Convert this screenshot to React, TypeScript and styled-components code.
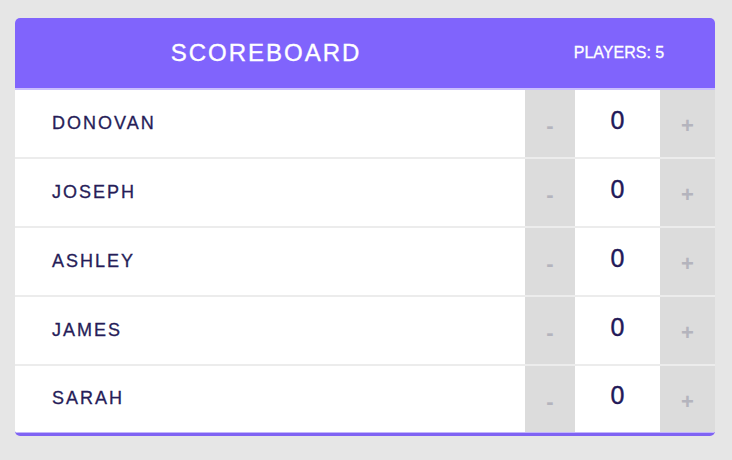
import React from "react";
import styled, { createGlobalStyle } from "styled-components";

const Global = createGlobalStyle`
  html, body { margin: 0; padding: 0; background: #e6e6e6; }
  body { font-family: "Liberation Sans", Arial, sans-serif; }
`;

const Page = styled.div`
  padding: 18px 17px 0 15px;
`;

const Card = styled.div`
  width: 700px;
  background: #ffffff;
  border-radius: 5px;
  overflow: hidden;
  border-bottom: 3px solid #7f63f3;
`;

const Header = styled.header`
  display: flex;
  align-items: center;
  height: 70px;
  background: #8064fc;
  border-bottom: 2px solid #cbbffd;
  color: #ffffff;
`;

const Title = styled.h1`
  flex: 1;
  margin: 0;
  padding-left: 2px;
  text-align: center;
  font-size: 24px;
  font-weight: normal;
  letter-spacing: 2px;
  -webkit-text-stroke: 0.35px #ffffff;
`;

const Stats = styled.div`
  width: 200px;
  padding-left: 8px;
  box-sizing: border-box;
  text-align: center;
  font-size: 16px;
  -webkit-text-stroke: 0.3px #ffffff;
`;

const Row = styled.div<{ $last?: boolean }>`
  display: flex;
  height: ${(p) => (p.$last ? "66px" : "67px")};
  border-bottom: ${(p) => (p.$last ? "1px solid #c3b5fb" : "2px solid #ececec")};
`;

const Name = styled.div`
  flex: 1;
  display: flex;
  align-items: center;
  padding: 0 0 1px 37px;
  font-size: 18px;
  letter-spacing: 2px;
  color: #261d58;
  -webkit-text-stroke: 0.3px #261d58;
`;

const Counter = styled.div`
  display: flex;
`;

const Action = styled.button<{ $w: number }>`
  width: ${(p) => p.$w}px;
  border: none;
  margin: 0;
  background: #dcdcdc;
  color: #b4b4bd;
  font-family: "Liberation Sans", Arial, sans-serif;
  font-weight: bold;
  font-size: 22px;
  display: flex;
  align-items: center;
  justify-content: center;
  padding: 5px 0 0 0;
  cursor: pointer;
`;

const Score = styled.div`
  width: 85px;
  display: flex;
  align-items: center;
  justify-content: center;
  padding-bottom: 7px;
  box-sizing: border-box;
  font-size: 25px;
  color: #221958;
  -webkit-text-stroke: 0.4px #221958;
`;

const players = ["DONOVAN", "JOSEPH", "ASHLEY", "JAMES", "SARAH"];

export default function App() {
  return (
    <>
      <Global />
      <Page>
        <Card>
          <Header>
            <Title>SCOREBOARD</Title>
            <Stats>PLAYERS: {players.length}</Stats>
          </Header>
          {players.map((name, i) => (
            <Row key={name} $last={i === players.length - 1}>
              <Name>{name}</Name>
              <Counter>
                <Action $w={50}>-</Action>
                <Score>0</Score>
                <Action $w={55}>+</Action>
              </Counter>
            </Row>
          ))}
        </Card>
      </Page>
    </>
  );
}
